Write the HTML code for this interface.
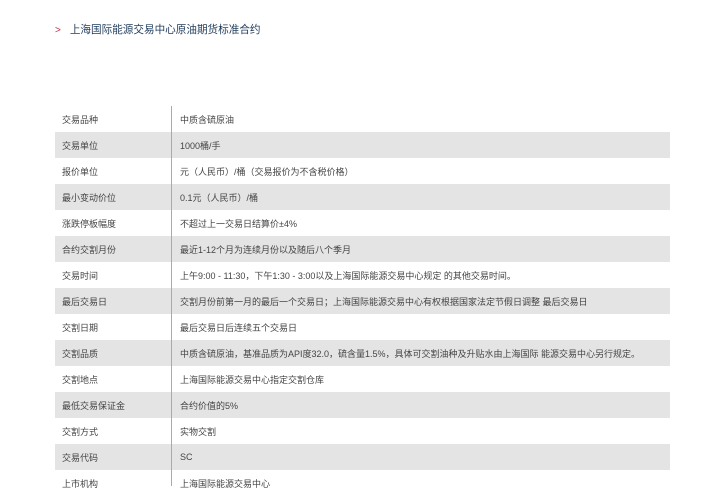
<!DOCTYPE html>
<html><head><meta charset="utf-8"><style>
body{margin:0;width:720px;height:486px;overflow:hidden;background:#fff;font-family:"Liberation Sans","Noto Sans CJK SC",sans-serif;}
.t{position:absolute;left:55px;top:22px;font-size:10.6px;color:#1f3b5a;}
.t b{color:#c0324a;font-weight:normal;margin-right:9px;font-size:10px}
.line{position:absolute;left:171px;top:106px;width:1px;height:380px;background:#aaa;}
table{position:absolute;left:55px;top:106px;width:615px;border-collapse:collapse;font-size:9px;color:#444;table-layout:fixed;}
td{height:26px;padding:0;vertical-align:middle;white-space:nowrap;}
col.a{width:116px}
td:first-child{padding-left:7px;}
td:last-child{padding-left:9px;}
tr:nth-child(even){background:#e4e4e4;}
</style></head><body>
<div class="t"><b>&gt;</b>上海国际能源交易中心原油期货标准合约</div>
<table><colgroup><col class="a"><col></colgroup>
<tr><td>交易品种</td><td>中质含硫原油</td></tr>
<tr><td>交易单位</td><td>1000桶/手</td></tr>
<tr><td>报价单位</td><td>元（人民币）/桶（交易报价为不含税价格）</td></tr>
<tr><td>最小变动价位</td><td>0.1元（人民币）/桶</td></tr>
<tr><td>涨跌停板幅度</td><td>不超过上一交易日结算价±4%</td></tr>
<tr><td>合约交割月份</td><td>最近1-12个月为连续月份以及随后八个季月</td></tr>
<tr><td>交易时间</td><td>上午9:00 - 11:30，下午1:30 - 3:00以及上海国际能源交易中心规定 的其他交易时间。</td></tr>
<tr><td>最后交易日</td><td>交割月份前第一月的最后一个交易日；上海国际能源交易中心有权根据国家法定节假日调整 最后交易日</td></tr>
<tr><td>交割日期</td><td>最后交易日后连续五个交易日</td></tr>
<tr><td>交割品质</td><td>中质含硫原油，基准品质为API度32.0，硫含量1.5%，具体可交割油种及升贴水由上海国际 能源交易中心另行规定。</td></tr>
<tr><td>交割地点</td><td>上海国际能源交易中心指定交割仓库</td></tr>
<tr><td>最低交易保证金</td><td>合约价值的5%</td></tr>
<tr><td>交割方式</td><td>实物交割</td></tr>
<tr><td>交易代码</td><td>SC</td></tr>
<tr><td>上市机构</td><td>上海国际能源交易中心</td></tr>
</table>
<div class="line"></div>
</body></html>
